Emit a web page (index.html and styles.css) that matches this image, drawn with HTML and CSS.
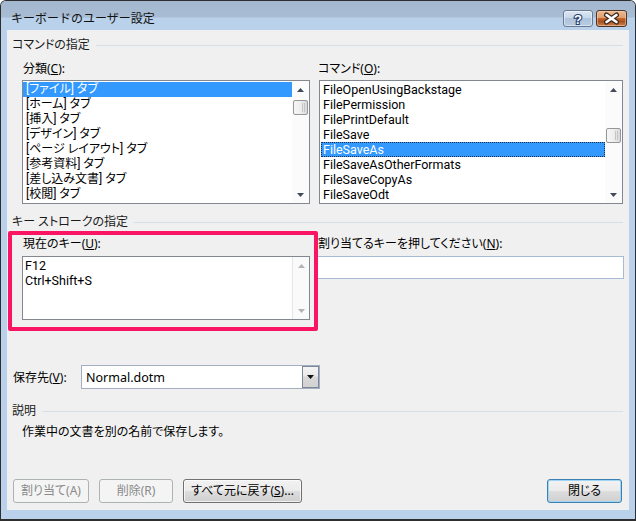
FILE: index.html
```html
<!DOCTYPE html>
<html lang="ja">
<head>
<meta charset="utf-8">
<title>キーボードのユーザー設定</title>
<link rel="stylesheet" href="styles.css">
</head>
<body>
<div class="window">
  <div class="titlebar">
    <span class="title">キーボードのユーザー設定</span>
    <div class="caption-btns">
      <span class="cbtn help"><svg width="28" height="15" viewBox="0 0 28 15"><text x="14" y="12.5" text-anchor="middle" class="qmark">?</text></svg></span>
      <span class="cbtn close"><svg width="29" height="15" viewBox="0 0 29 15"><path d="M9.5 4 L19.5 11 M19.5 4 L9.5 11" stroke="#3a2a20" stroke-width="5" stroke-linecap="round"/><path d="M9.5 4 L19.5 11 M19.5 4 L9.5 11" stroke="#ffffff" stroke-width="2.6" stroke-linecap="round"/></svg></span>
    </div>
  </div>
  <div class="frame">
    <div class="client">
      <div class="group-head"><span>コマンドの指定</span></div>
      <div class="pair labels">
        <span class="lbl">分類(<u>C</u>):</span>
        <span class="lbl lbl-r">コマンド(<u>O</u>):</span>
      </div>
      <div class="pair lists">
        <div class="listbox">
          <ul class="items">
            <li class="sel">[ファイル] タブ</li>
            <li>[ホーム] タブ</li>
            <li>[挿入] タブ</li>
            <li>[デザイン] タブ</li>
            <li>[ページ レイアウト] タブ</li>
            <li>[参考資料] タブ</li>
            <li>[差し込み文書] タブ</li>
            <li>[校閲] タブ</li>
          </ul>
          <div class="vscroll">
            <span class="arrow"><svg width="7" height="4" viewBox="0 0 7 4"><path d="M0 4H7L3.5 0Z"/></svg></span>
            <span class="thumb thumb-a"><i></i></span>
            <span class="track"></span>
            <span class="arrow"><svg width="7" height="4" viewBox="0 0 7 4"><path d="M0 0H7L3.5 4Z"/></svg></span>
          </div>
        </div>
        <div class="listbox latin">
          <ul class="items">
            <li>FileOpenUsingBackstage</li>
            <li>FilePermission</li>
            <li>FilePrintDefault</li>
            <li>FileSave</li>
            <li class="sel focus">FileSaveAs</li>
            <li>FileSaveAsOtherFormats</li>
            <li>FileSaveCopyAs</li>
            <li>FileSaveOdt</li>
          </ul>
          <div class="vscroll">
            <span class="arrow"><svg width="7" height="4" viewBox="0 0 7 4"><path d="M0 4H7L3.5 0Z"/></svg></span>
            <span class="thumb thumb-b"><i></i></span>
            <span class="track"></span>
            <span class="arrow"><svg width="7" height="4" viewBox="0 0 7 4"><path d="M0 0H7L3.5 4Z"/></svg></span>
          </div>
        </div>
      </div>

      <div class="group-head head-2"><span>キー ストロークの指定</span></div>
      <div class="pair labels labels-2">
        <span class="lbl">現在のキー(<u>U</u>):</span>
        <span class="lbl">割り当てるキーを押してください(<u>N</u>):</span>
      </div>
      <div class="pair keys">
        <div class="listbox keylist latin">
          <ul class="items">
            <li>F12</li>
            <li>Ctrl+Shift+S</li>
          </ul>
          <div class="vscroll disabled">
            <span class="arrow"><svg width="7" height="4" viewBox="0 0 7 4"><path d="M0 4H7L3.5 0Z"/></svg></span>
            <span class="track"></span>
            <span class="arrow"><svg width="7" height="4" viewBox="0 0 7 4"><path d="M0 0H7L3.5 4Z"/></svg></span>
          </div>
        </div>
        <div class="textbox"></div>
      </div>

      <div class="save-row">
        <span class="lbl">保存先(<u>V</u>):</span>
        <div class="combo">
          <span class="combo-text">Normal.dotm</span>
          <span class="combo-btn"><svg width="7" height="4" viewBox="0 0 7 4"><path d="M0 0H7L3.5 4Z"/></svg></span>
        </div>
      </div>

      <div class="group-head head-3"><span>説明</span></div>
      <p class="desc">作業中の文書を別の名前で保存します。</p>

      <div class="buttons">
        <button class="btn w76" disabled>割り当て(A)</button>
        <button class="btn w74" disabled>削除(R)</button>
        <button class="btn w119">すべて元に戻す(<u>S</u>)...</button>
        <button class="btn w75 default">閉じる</button>
      </div>

      <div class="highlight"></div>
    </div>
  </div>
</div>
</body>
</html>
```

FILE: styles.css
```css
* { box-sizing: border-box; }

body {
  margin: 0;
  font-family: "Noto Sans", "Noto Sans CJK JP", sans-serif;
  font-size: 12px;
  color: #000;
  background: #ffffff;
  font-feature-settings: "palt";
}

.window {
  width: 636px;
  height: 521px;
  border: 1px solid #2e2e2e;
  border-bottom-width: 2px;
  border-radius: 6px 6px 0 0;
  background: #b9d1ea;
  display: flex;
  flex-direction: column;
  overflow: hidden;
}

.titlebar {
  height: 29px;
  flex: none;
  display: flex;
  align-items: flex-start;
  justify-content: space-between;
  padding: 0 8px 0 10px;
  background: linear-gradient(#a3b7cf 0, #a8bcd4 16px, #b9d1ea 17px, #b9d1ea 100%);
}

.title {
  margin-top: 10px;
  line-height: 16px;
  font-size: 12px;
  font-feature-settings: normal;
  color: #111;
}

.caption-btns {
  margin-top: 9px;
  display: flex;
  gap: 3px;
}

.cbtn {
  display: block;
  height: 17px;
  border-radius: 3px;
}
.cbtn svg { display: block; }

.help {
  width: 30px;
  border: 1px solid #6a7a90;
  background: linear-gradient(#dbe6f2 0, #c8d8ea 45%, #afc4dc 50%, #b7cbe2 100%);
  box-shadow: inset 0 0 0 1px rgba(255,255,255,0.45);
}
.qmark {
  font-family: "Liberation Sans", sans-serif;
  font-weight: bold;
  font-size: 13px;
  fill: #ffffff;
  stroke: #27406a;
  stroke-width: 2.2px;
  paint-order: stroke;
}

.close {
  width: 31px;
  border: 1px solid #4a3628;
  background: linear-gradient(#ebb893 0, #e09f70 45%, #c5652b 50%, #a8501f 70%, #cf8453 100%);
  box-shadow: inset 0 0 0 1px rgba(255,220,190,0.45);
}

.frame {
  flex: 1;
  padding: 0 6px;
}

.client {
  position: relative;
  height: 480px;
  background: #f0f0f0;
  padding-top: 8px;
  display: flex;
  flex-direction: column;
}

.group-head {
  display: flex;
  align-items: center;
  gap: 6px;
  height: 14px;
  line-height: 14px;
  padding: 0 6px 0 5px;
  color: #1b1b1b;
}
.group-head::after {
  content: "";
  flex: 1;
  height: 1px;
  background: #d5dfe5;
}
.head-2 { margin-top: 11px; }
.head-3 { margin-top: 15px; }

.pair {
  display: grid;
  grid-template-columns: 288px 305px;
  column-gap: 8px;
  margin-left: 15px;
}

.labels {
  margin-top: 10px;
  height: 14px;
  line-height: 14px;
}
.labels .lbl:first-child { padding-left: 1px; }
.labels-2 { margin-top: 8px; }
.lbl-r { padding-left: 0; }

.lists {
  margin-top: 4px;
  height: 124px;
}
.lists .listbox:last-child { margin-left: 1px; width: 304px; }

.listbox {
  display: flex;
  border: 1px solid #828790;
  background: #ffffff;
  height: 100%;
}

.items {
  flex: 1;
  list-style: none;
  margin: 0;
  padding: 1px 0 0;
  overflow: hidden;
  font-family: Roboto, "Noto Sans CJK JP", sans-serif;
  font-size: 12px;
}
.latin .items { font-size: 12.5px; }
.items li {
  height: 15px;
  line-height: 15px;
  padding-left: 3px;
  white-space: nowrap;
}
.items li.sel {
  background: #3399ff;
  color: #ffffff;
}
.items li.focus {
  outline: 1px dotted #1d2f4a;
  outline-offset: -1px;
  margin-left: 1px;
  padding-left: 2px;
}

.vscroll {
  width: 17px;
  flex: none;
  display: flex;
  flex-direction: column;
  background: #fbfbfb;
}
.vscroll .arrow {
  height: 17px;
  display: flex;
  align-items: center;
  justify-content: center;
  flex: none;
}
.vscroll .arrow svg { display: block; fill: #3f4a5a; }
.vscroll .track { flex: 1; }
.vscroll.disabled { border-left: 1px solid #e6e6e6; background: #fafafa; }
.vscroll.disabled .arrow svg { fill: #b4b4b4; }

.thumb {
  display: block;
  margin: 2px 1px 0;
  height: 15px;
  border: 1px solid #979797;
  border-radius: 2px;
  background: linear-gradient(90deg, #f6f6f6 0, #ededed 55%, #d8d8d8 100%);
  position: relative;
  flex: none;
}
.thumb i {
  position: absolute;
  right: 2px;
  top: 2px;
  bottom: 2px;
  width: 3px;
  border-left: 1px solid #c4c4c4;
  border-right: 1px solid #c4c4c4;
}
.thumb-b { margin-top: 30px; }

.keys {
  margin-top: 5px;
  height: 64px;
  grid-template-columns: 288px 307px;
  column-gap: 7px;
}
.keylist .items { padding-left: 0; }
.keylist .items li { padding-left: 2px; }

.textbox {
  height: 23px;
  border: 1px solid #a8bbd4;
  background: #ffffff;
}

.save-row {
  margin-top: 45px;
  display: flex;
  align-items: center;
  height: 24px;
  padding-left: 6px;
}
.save-row .lbl { width: 68px; }
.combo {
  width: 239px;
  height: 24px;
  border: 1px solid #a3afc0;
  background: #ffffff;
  display: flex;
  align-items: center;
}
.combo-text {
  flex: 1;
  padding-left: 4px;
  font-size: 12.5px;
}
.combo-btn {
  width: 17px;
  height: 22px;
  border: 1px solid #7c8797;
  background: linear-gradient(#f4f4f4 0, #e9e9e9 45%, #d8d8d8 50%, #d2d2d2 100%);
  display: flex;
  align-items: center;
  justify-content: center;
}
.combo-btn svg { display: block; fill: #111; }

.desc {
  margin: 7px 0 0;
  padding-left: 15px;
  line-height: 14px;
  height: 14px;
}

.buttons {
  margin-top: 40px;
  display: flex;
  gap: 10px;
  padding: 0 7px 0 6px;
}
.btn {
  height: 24px;
  padding: 0;
  font: inherit;
  font-size: 12px;
  line-height: 20px;
  color: #000;
  border: 1px solid #707070;
  border-radius: 3px;
  background: linear-gradient(#f2f2f2 0, #ebebeb 48%, #dddddd 52%, #cfcfcf 100%);
  box-shadow: inset 0 0 0 1px rgba(255,255,255,0.7);
}
.btn:disabled {
  color: #8a8a8a;
  border-color: #adb2b5;
  background: #f4f4f4;
  box-shadow: none;
}
.btn.default {
  margin-left: auto;
  border-color: #3c7fb1;
  box-shadow: inset 0 0 0 1px #9fd6f5;
}
.w76 { width: 76px; }
.w74 { width: 74px; }
.w119 { width: 119px; }
.w75 { width: 75px; }

.highlight {
  position: absolute;
  left: 1px;
  top: 201px;
  width: 310px;
  height: 100px;
  border: 4px solid #fa1464;
  border-radius: 2px;
  pointer-events: none;
}
```
